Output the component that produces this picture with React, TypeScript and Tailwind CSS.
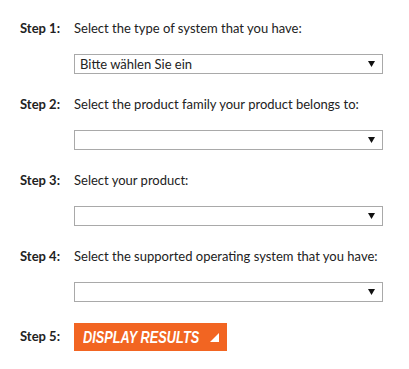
import React from "react";

function Select({ value }: { value?: string }) {
  return (
    <div className="flex h-[20px] w-[309px] items-center justify-between border border-[#a9a9a9] bg-white pl-[5px] pr-[7px]">
      <span className="text-[13px] leading-none text-[#222]">{value ?? ""}</span>
      <svg width="7" height="6" viewBox="0 0 7 6" className="shrink-0">
        <polygon points="0,0 7,0 3.5,6" fill="#111" />
      </svg>
    </div>
  );
}

function Row({ step, label, children }: { step: string; label: string; children?: React.ReactNode }) {
  return (
    <div className="flex flex-col">
      <div className="flex h-[18px] items-center">
        <span className="w-[54px] font-bold text-[13px] text-[#222]">{step}</span>
        <span className="text-[13px] text-[#222]">{label}</span>
      </div>
      <div className="mt-[16px] pl-[54px]">{children}</div>
    </div>
  );
}

export default function App() {
  return (
    <div
      className="h-[369px] w-[409px] bg-white pl-[20px] pt-[20px]"
      style={{ fontFamily: "Lato, 'Open Sans', sans-serif" }}
    >
      <div className="flex flex-col gap-[22px]">
        <Row step="Step 1:" label="Select the type of system that you have:">
          <Select value="Bitte wählen Sie ein" />
        </Row>
        <Row step="Step 2:" label="Select the product family your product belongs to:">
          <Select />
        </Row>
        <Row step="Step 3:" label="Select your product:">
          <Select />
        </Row>
        <Row step="Step 4:" label="Select the supported operating system that you have:">
          <Select />
        </Row>
      </div>
      <div className="mt-[21px] flex items-center">
        <span className="w-[54px] font-bold text-[13px] text-[#222]">Step 5:</span>
        <button className="relative flex h-[28px] w-[153px] items-center overflow-hidden bg-[#f26522]">
          <span
            className="ml-[9px] inline-block origin-left scale-x-[0.75] whitespace-nowrap font-bold italic text-[17px] leading-none text-white"
            style={{ fontFamily: "'Liberation Sans', Arial, sans-serif" }}
          >
            DISPLAY RESULTS
          </span>
          <svg width="9" height="9" viewBox="0 0 9 9" className="absolute left-[136px] top-[10px]">
            <polygon points="9,0 9,9 0,9" fill="#fff" />
          </svg>
        </button>
      </div>
    </div>
  );
}
